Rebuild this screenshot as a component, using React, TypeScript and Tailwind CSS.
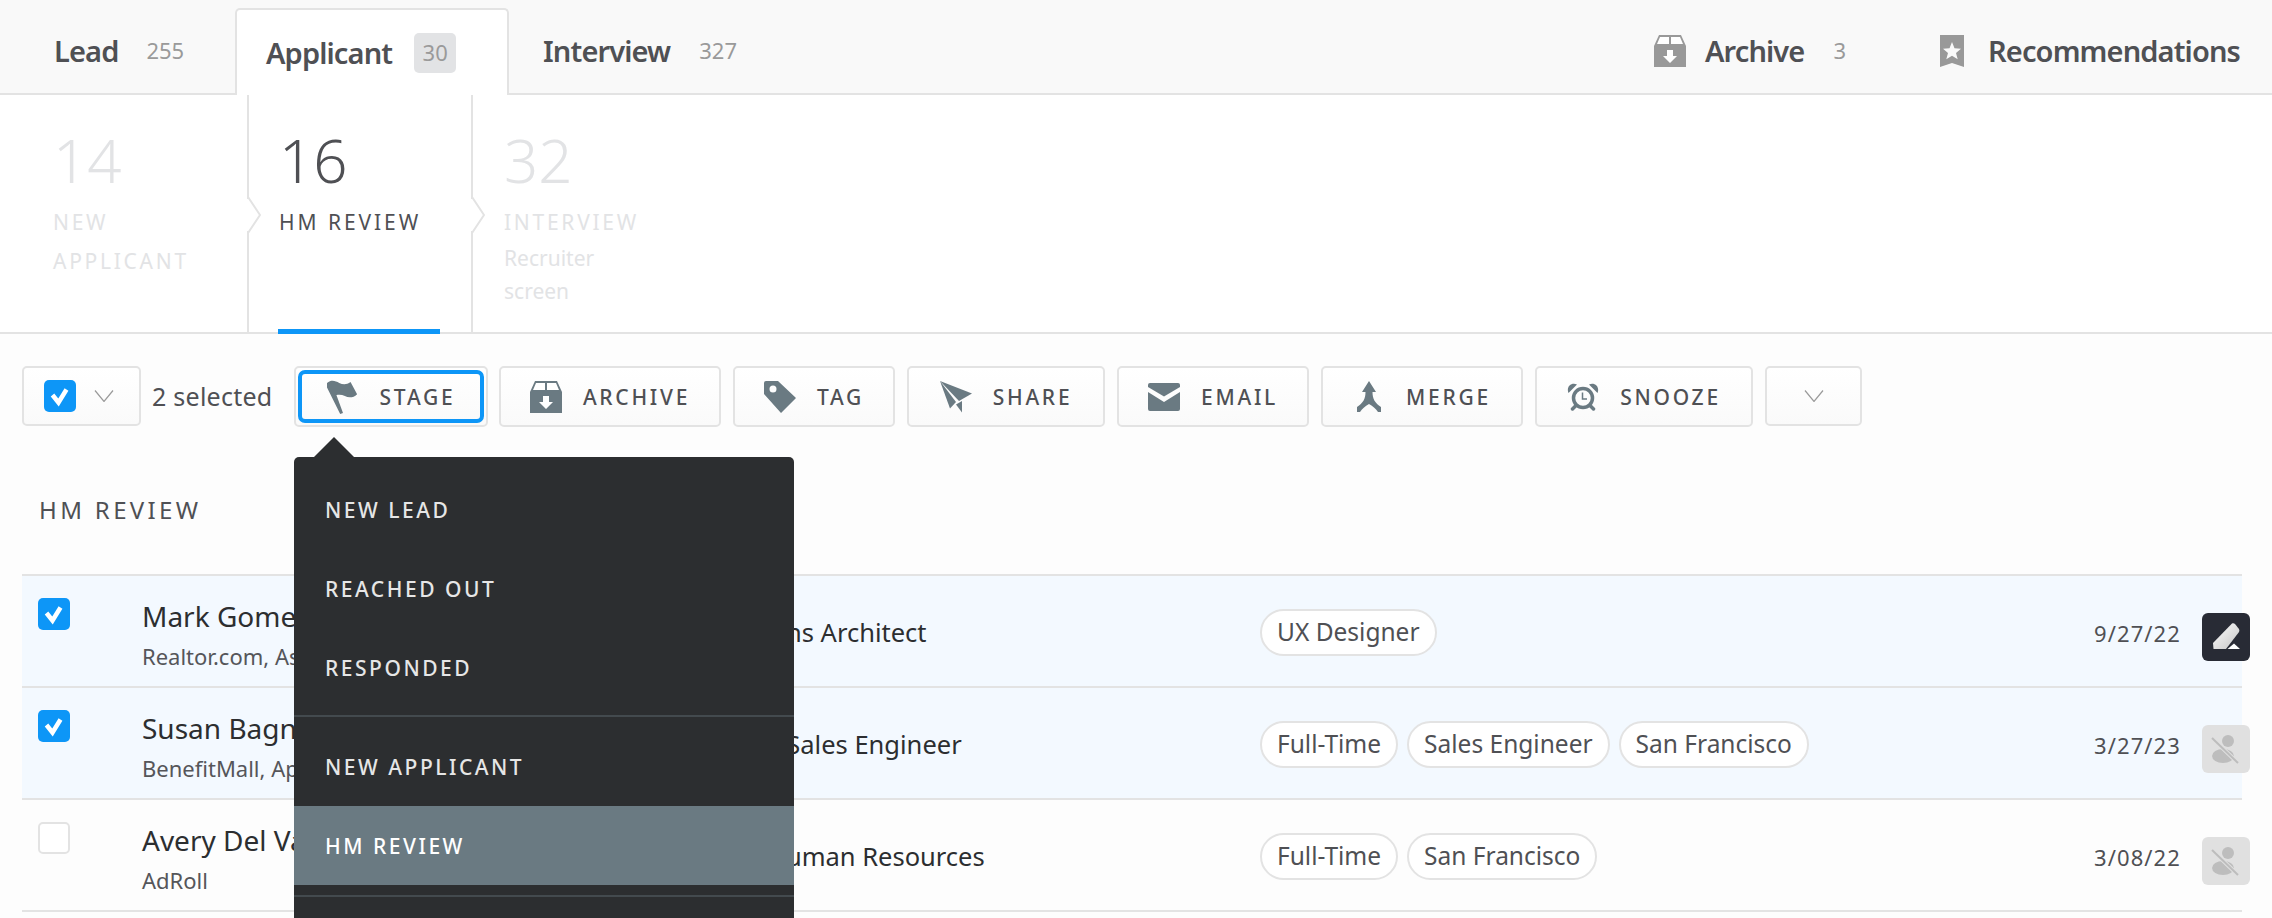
const NAVY = '#6a7a82'

function ArchiveIcon({ color = NAVY, className }: { color?: string; className?: string }) {
  return (
    <svg viewBox="0 0 32 32" className={className}>
      <path fill={color} d="M5 0h22l5 11v21H0V11z" />
      <path fill="#fff" d="M6 2h9v7H3zM17 2h9l3 7H17z" />
      <path fill="#fff" d="M13 15h6v6h4l-7 7-7-7h4z" />
    </svg>
  )
}

function BookmarkIcon({ className }: { className?: string }) {
  return (
    <svg viewBox="0 0 24 32" className={className}>
      <path fill="#999" d="M0 0h24v32l-12-4-12 4z" />
      <path fill="#fafafa" d="M12 7l2.500 6.300 6.500.4-5 4.200 1.700 6.400-5.700-3.600-5.700 3.600 1.700-6.400-5-4.200 6.500-.4z" />
    </svg>
  )
}

function FlagIcon() {
  return (
    <svg viewBox="0 0 34 36" className="h-[36px] w-[34px]">
      <path fill={NAVY} d="M0 3c5-4 9-2 13 0s8 2 12-1l7 13c-4 4-9 4-13 2-3-1.500-6-2-9-1l7 19-3 1L0 8z" />
    </svg>
  )
}

function TagIcon() {
  return (
    <svg viewBox="0 0 32 32" className="h-[32px] w-[32px]">
      <path fill={NAVY} fillRule="evenodd" d="M2 0h12l18 17-15 15L0 13V2a2 2 0 0 1 2-2zm7 4.500a3.500 3.500 0 1 0 0 7 3.500 3.500 0 0 0 0-7z" />
    </svg>
  )
}

function ShareIcon() {
  return (
    <svg viewBox="0 0 32 32" className="h-[32px] w-[32px]">
      <path fill={NAVY} d="M0 0l32 12.500-13 7.500z" />
      <path fill={NAVY} d="M0 0l16 21-6 6.500z" />
      <path fill={NAVY} d="M16 23.500l6-3.500v11.500z" />
    </svg>
  )
}

function EmailIcon() {
  return (
    <svg viewBox="0 0 32 28" className="h-[28px] w-[32px]">
      <path fill={NAVY} d="M2 0h28a2 2 0 0 1 2 2v2L16 13.500 0 4V2a2 2 0 0 1 2-2z" />
      <path fill={NAVY} d="M0 9l16 10 16-10v17a2 2 0 0 1-2 2H2a2 2 0 0 1-2-2z" />
    </svg>
  )
}

function MergeIcon() {
  return (
    <svg viewBox="0 0 24 31" className="h-[31px] w-[24px]">
      <path fill={NAVY} d="M12 0l7 11h-3.500c0 7 2.500 11 8.500 15v5h-3c-2-3-5-6-9-8-4 2-7 5-9 8H0v-5c6-4 8.500-8 8.500-15H5z" />
    </svg>
  )
}

function SnoozeIcon() {
  return (
    <svg viewBox="0 0 32 28" className="h-[28px] w-[32px]" fill="none">
      <circle cx="16" cy="15" r="9.500" stroke={NAVY} strokeWidth="3.500" />
      <path stroke={NAVY} strokeWidth="1.500" d="M15.500 9.500v6.500h4.500" />
      <path fill={NAVY} d="M1.500 10C-1 4 4-1 10 1.500zM30.500 10C33 4 28-1 22 1.500z" />
      <path stroke={NAVY} strokeWidth="3.500" strokeLinecap="round" d="M8.500 23l-3 3M23.500 23l3 3" />
    </svg>
  )
}

function Chevron({ className }: { className?: string }) {
  return (
    <svg viewBox="0 0 20 12" fill="none" stroke="#9a9a9a" strokeWidth="1.200" className={className}>
      <path d="M1 0.500l9 11 9-11" />
    </svg>
  )
}

function Check() {
  return (
    <svg viewBox="0 0 32 32" className="h-[32px] w-[32px]">
      <rect width="32" height="32" rx="5" fill="#0d96f7" />
      <path d="M8.500 15l6 7.500 8-13" fill="none" stroke="#fff" strokeWidth="4.500" />
    </svg>
  )
}

function ActionButton({ active }: { active?: boolean }) {
  if (active) {
    return (
      <svg viewBox="0 0 48 48" className="-mr-2 ml-[21px] mt-[37px] h-12 w-12 shrink-0">
        <defs>
          <linearGradient id="pen" x1="0" y1="0" x2="1" y2="1">
            <stop offset="0" stopColor="#fff" />
            <stop offset="1" stopColor="#c4c4c4" />
          </linearGradient>
        </defs>
        <rect width="48" height="48" rx="6" fill="#282b35" />
        <path fill="url(#pen)" d="M30 10.500c1-.5 2-.5 3 .5l4 5c.5 1 .5 2 0 3L24 36H11.500l-.5-6z" />
        <path fill="#fff" d="M32 30.500l6 5.500H25.500z" />
      </svg>
    )
  }
  return (
    <svg viewBox="0 0 48 48" className="-mr-2 ml-[21px] mt-[37px] h-12 w-12 shrink-0">
      <rect width="48" height="48" rx="6" fill="#e0e0e0" />
      <circle cx="26" cy="16" r="6" fill="#bdbdbd" />
      <ellipse cx="21" cy="31" rx="11" ry="7" fill="#bdbdbd" />
      <path d="M10 13l26 25" stroke="#e0e0e0" strokeWidth="4" />
      <path d="M10 13l26 25" stroke="#bdbdbd" strokeWidth="2" />
    </svg>
  )
}

function ToolButton({ icon, label, width }: { icon: React.ReactNode; label: string; width: string }) {
  return (
    <div className={`flex h-[61px] shrink-0 items-center justify-center gap-[21px] rounded-[5px] border-2 border-[#e3e3e3] bg-linear-to-b from-white to-[#fafafa] ${width}`}>
      <span className="flex w-[32px] justify-center">{icon}</span>
      <span className="pt-[3px] text-[21px] font-medium tracking-[0.13em] text-[#4f5054]">{label}</span>
    </div>
  )
}

function StageChevron({ left }: { left: string }) {
  return (
    <svg viewBox="0 0 14 36" className={`absolute top-[102px] z-10 h-[36px] w-[14px] ${left}`}>
      <path d="M1 0l12 18L1 36" fill="#fff" stroke="#e3e3e3" strokeWidth="2" />
      <path d="M0 2h1v32H0z" fill="#fff" />
    </svg>
  )
}

const rows = [
  { name: 'Mark Gomez', sub: 'Realtor.com, Associate', role: 'Solutions Architect', roleClass: '', date: '9/27/22', tags: ['UX Designer'], selected: true, active: true },
  { name: 'Susan Bagnall', sub: 'BenefitMall, Apple', role: 'Senior Sales Engineer', roleClass: '', date: '3/27/23', tags: ['Full-Time', 'Sales Engineer', 'San Francisco'], selected: true },
  { name: 'Avery Del Valle', sub: 'AdRoll', role: 'Human Resources', roleClass: 'ml-[64px]', date: '3/08/22', tags: ['Full-Time', 'San Francisco'] },
]

const menuItem = 'flex h-[79px] items-center px-[31px] pt-[2px] text-[21px] font-medium tracking-[0.12em] text-[#e6e6e6]'
const navLabel = 'text-[29px] font-semibold tracking-[-0.03em] text-[#4f5054]'

export default function App() {
  return (
    <div className="relative h-[918px] overflow-hidden bg-[#fdfdfd] font-['Noto_Sans',sans-serif]">
      {/* top tabs */}
      <div className="flex h-[95px] items-end border-b-2 border-[#e3e3e3] bg-[#f9f9f9] pl-[54px] pr-[32px]">
        <div className="flex h-[93px] w-[181px] items-center gap-[28px] pt-[8px]">
          <span className={navLabel}>Lead</span>
          <span className="text-[22px] text-[#9a9a9a]">255</span>
        </div>
        <div className="relative -mb-[2px] flex h-[87px] w-[274px] items-center rounded-t-[5px] border-2 border-b-0 border-[#e3e3e3] bg-white pl-[29px]">
          <span className={navLabel}>Applicant</span>
          <span className="ml-[22px] flex h-10 w-[42px] items-center justify-center rounded-[5px] bg-[#e2e3e5] text-[22px] text-[#9a9a9a]">30</span>
        </div>
        <div className="ml-[34px] flex h-[93px] items-center gap-[29px] pt-[8px]">
          <span className={navLabel}>Interview</span>
          <span className="text-[22px] text-[#9a9a9a]">327</span>
        </div>
        <div className="ml-auto flex h-[93px] items-center pt-[8px]">
          <ArchiveIcon color="#999" className="h-8 w-8" />
          <span className={`ml-[19px] ${navLabel}`}>Archive</span>
          <span className="ml-[29px] text-[22px] text-[#9a9a9a]">3</span>
          <BookmarkIcon className="ml-[94px] h-8 w-6" />
          <span className={`ml-[24px] ${navLabel}`}>Recommendations</span>
        </div>
      </div>

      {/* stage row */}
      <div className="relative flex h-[239px] border-b-2 border-[#e3e3e3] bg-white">
        <div className="w-[247px] pl-[53px] pt-[35px] text-[#e2e3e5]">
          <div className="h-[60px] text-[60px] font-light leading-[60px]">14</div>
          <div className="mt-[13px] text-[21px] leading-[39px] tracking-[0.13em]">
            NEW<br />APPLICANT
          </div>
        </div>
        <div className="relative w-[226px] border-x-2 border-[#e3e3e3] pl-[30px] pt-[35px] text-[#4f5054]">
          <div className="h-[60px] text-[60px] font-light leading-[60px]">16</div>
          <div className="mt-[13px] text-[21px] leading-[39px] tracking-[0.14em]">HM REVIEW</div>
          <div className="absolute -bottom-[2px] left-[29px] h-[5px] w-[162px] bg-[#0d96f7]" />
        </div>
        <div className="pl-[31px] pt-[35px] text-[#e2e3e5]">
          <div className="h-[60px] text-[60px] font-light leading-[60px]">32</div>
          <div className="mt-[13px] text-[21px] leading-[39px] tracking-[0.13em]">INTERVIEW</div>
          <div className="text-[21px] leading-[33px]">
            Recruiter<br />screen
          </div>
        </div>
        <StageChevron left="left-[247px]" />
        <StageChevron left="left-[471px]" />
      </div>

      {/* toolbar */}
      <div className="flex items-start pl-[22px] pt-[32px]">
        <div className="flex h-[60px] w-[119px] items-center rounded-[5px] border-2 border-[#e3e3e3] bg-linear-to-b from-white to-[#fafafa] pl-[20px]">
          <Check />
          <Chevron className="ml-[18px] h-[12px] w-[20px]" />
        </div>
        <span className="ml-[11px] w-[142px] pt-[12px] text-[25px] tracking-[0.01em] text-[#4f5054]">2 selected</span>
        <div className="relative">
          <ToolButton icon={<FlagIcon />} label="STAGE" width="w-[194px]" />
          <div className="absolute inset-[4px] rounded-[7px] border-[4px] border-[#0d96f7]" />
        </div>
        <div className="ml-[11px] flex gap-[12px]">
          <ToolButton icon={<ArchiveIcon className="h-8 w-8" />} label="ARCHIVE" width="w-[222px]" />
          <ToolButton icon={<TagIcon />} label="TAG" width="w-[162px]" />
          <ToolButton icon={<ShareIcon />} label="SHARE" width="w-[198px]" />
          <ToolButton icon={<EmailIcon />} label="EMAIL" width="w-[192px]" />
          <ToolButton icon={<MergeIcon />} label="MERGE" width="w-[202px]" />
          <ToolButton icon={<SnoozeIcon />} label="SNOOZE" width="w-[218px]" />
          <div className="flex h-[60px] w-[97px] items-center justify-center rounded-[5px] border-2 border-[#e3e3e3] bg-linear-to-b from-white to-[#fafafa]">
            <Chevron className="h-[12px] w-[20px]" />
          </div>
        </div>
      </div>

      {/* candidates */}
      <div className="pl-[39px] pt-[65px] text-[24px] leading-[36px] tracking-[0.14em] text-[#4f5054]">HM REVIEW</div>
      <div className="ml-[22px] mr-[30px] mt-[46px] border-t-2 border-[#e3e3e3]">
        {rows.map((row) => (
          <div key={row.name} className={`flex h-[112px] items-start border-b-2 border-[#e3e3e3] ${row.selected ? 'bg-[#f3f9ff]' : ''}`}>
            <div className="ml-4 mt-[22px] h-8 w-8 shrink-0">
              {row.selected ? <Check /> : <div className="h-8 w-8 rounded-[5px] border-2 border-[#e3e3e3] bg-white" />}
            </div>
            <div className="ml-[72px] w-[561px] shrink-0 pt-[18px]">
              <div className="text-[28px] leading-[44px] text-[#2c2e30]">{row.name}</div>
              <div className="text-[22px] leading-[36px] text-[#55565a]">{row.sub}</div>
            </div>
            <div className="flex h-full w-[557px] shrink-0 items-start pt-[36px] text-[25.5px] leading-[40px] text-[#2c2e30]">
              <span className={row.roleClass}>{row.role}</span>
            </div>
            <div className="flex flex-1 gap-[9px] pt-[33px]">
              {row.tags.map((tag) => (
                <span key={tag} className="flex h-[47px] items-center rounded-full border-2 border-[#e3e3e3] bg-white px-[15px] text-[24.5px] text-[#4f5054]">
                  {tag}
                </span>
              ))}
            </div>
            <div className="mt-[41px] text-[22px] leading-[32px] tracking-[0.05em] text-[#4f5054]">{row.date}</div>
            <ActionButton active={row.active} />
          </div>
        ))}
      </div>

      {/* stage menu */}
      <div className="absolute left-[294px] top-[457px] h-[461px] w-[500px] rounded-t-[5px] bg-[#2c2e30] pt-[13px]">
        <div className="absolute -top-[20px] left-[20px] h-0 w-0 border-x-[20px] border-b-[20px] border-x-transparent border-b-[#2c2e30]" />
        <div className={menuItem}>NEW LEAD</div>
        <div className={menuItem}>REACHED OUT</div>
        <div className={menuItem}>RESPONDED</div>
        <div className="mb-[10px] mt-[8px] h-[2px] bg-[#434a4e]" />
        <div className={menuItem}>NEW APPLICANT</div>
        <div className={`${menuItem} bg-[#6a7a82] text-white`}>HM REVIEW</div>
        <div className="mt-[10px] h-[2px] bg-[#434a4e]" />
      </div>
    </div>
  )
}
